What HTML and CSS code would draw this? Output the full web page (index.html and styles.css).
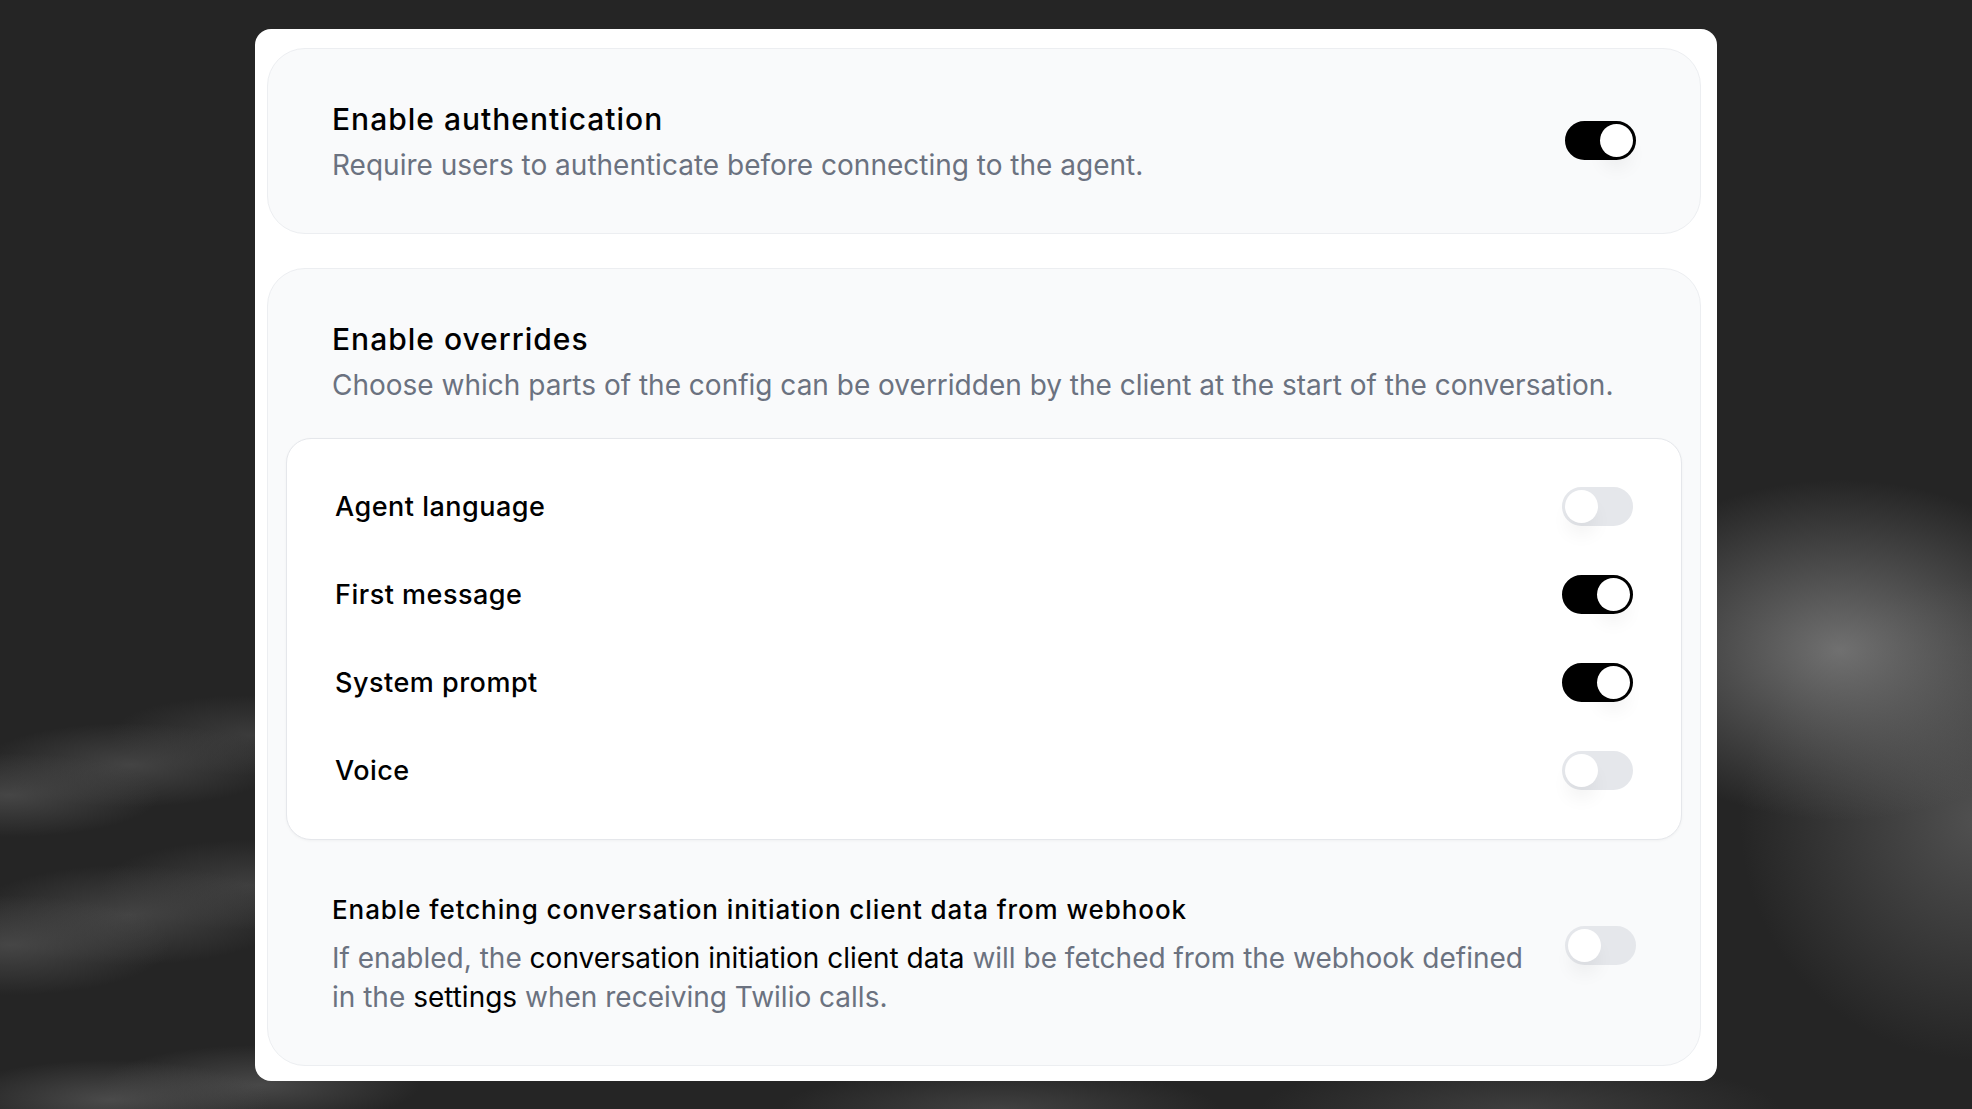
FILE: index.html
```html
<!DOCTYPE html>
<html lang="en">
<head>
<meta charset="utf-8">
<title>Agent security settings</title>
<link rel="stylesheet" href="styles.css">
</head>
<body>
<main class="panel">
  <section class="card card-row">
    <div class="text">
      <h2 class="title">Enable authentication</h2>
      <p class="desc">Require users to authenticate before connecting to the agent.</p>
    </div>
    <span class="switch on" role="switch" aria-checked="true"><span class="knob"></span></span>
  </section>

  <section class="card">
    <h2 class="title">Enable overrides</h2>
    <p class="desc">Choose which parts of the config can be overridden by the client at the start of the conversation.</p>

    <div class="list">
      <div class="item">
        <span class="label">Agent language</span>
        <span class="switch" role="switch" aria-checked="false"><span class="knob"></span></span>
      </div>
      <div class="item">
        <span class="label">First message</span>
        <span class="switch on" role="switch" aria-checked="true"><span class="knob"></span></span>
      </div>
      <div class="item">
        <span class="label">System prompt</span>
        <span class="switch on" role="switch" aria-checked="true"><span class="knob"></span></span>
      </div>
      <div class="item">
        <span class="label">Voice</span>
        <span class="switch" role="switch" aria-checked="false"><span class="knob"></span></span>
      </div>
    </div>

    <div class="webhook">
      <div class="text">
        <h3 class="subtitle">Enable fetching conversation initiation client data from webhook</h3>
        <p class="desc desc-long">If enabled, the <span class="strong">conversation initiation client data</span> will be fetched from the webhook defined in the <span class="strong">settings</span> when receiving Twilio calls.</p>
      </div>
      <span class="switch switch-top" role="switch" aria-checked="false"><span class="knob"></span></span>
    </div>
  </section>
</main>
</body>
</html>
```

FILE: styles.css
```css
* { box-sizing: border-box; }

html, body { height: 100%; }

body {
  margin: 0;
  height: 1109px;
  display: flex;
  align-items: center;
  justify-content: center;
  font-family: Inter, "Noto Sans", "Liberation Sans", sans-serif;
  background-color: #252525;
  background-image:
    radial-gradient(ellipse 250px 170px at 1840px 650px, rgba(116,116,116,0.95), rgba(116,116,116,0) 100%),
    radial-gradient(ellipse 240px 240px at 1980px 820px, rgba(88,88,88,0.85), rgba(88,88,88,0) 100%),
    radial-gradient(ellipse 150px 42px at 10px 795px, rgba(78,78,78,0.8), rgba(78,78,78,0) 100%),
    radial-gradient(ellipse 150px 42px at 130px 765px, rgba(78,78,78,0.75), rgba(78,78,78,0) 100%),
    radial-gradient(ellipse 140px 40px at 250px 735px, rgba(74,74,74,0.6), rgba(74,74,74,0) 100%),
    radial-gradient(ellipse 160px 50px at 10px 945px, rgba(78,78,78,0.8), rgba(78,78,78,0) 100%),
    radial-gradient(ellipse 160px 50px at 130px 915px, rgba(78,78,78,0.75), rgba(78,78,78,0) 100%),
    radial-gradient(ellipse 150px 45px at 250px 885px, rgba(76,76,76,0.65), rgba(76,76,76,0) 100%),
    radial-gradient(ellipse 160px 40px at 110px 1100px, rgba(84,84,84,0.8), rgba(84,84,84,0) 100%),
    radial-gradient(ellipse 160px 40px at 260px 1085px, rgba(84,84,84,0.75), rgba(84,84,84,0) 100%),
    radial-gradient(ellipse 220px 40px at 1000px 1109px, rgba(72,72,72,0.8), rgba(72,72,72,0) 100%),
    radial-gradient(ellipse 260px 50px at 1520px 1109px, rgba(68,68,68,0.8), rgba(68,68,68,0) 100%);
}

.panel {
  width: 1462px;
  height: 1052px;
  background: #ffffff;
  border-radius: 16px;
  padding: 19px 16px 15px 12px;
  display: flex;
  flex-direction: column;
  gap: 34px;
}

.card {
  background: #f9fafb;
  border: 1px solid #eceef1;
  border-radius: 38px;
  padding: 48px 64px;
}

.card-row {
  display: flex;
  align-items: center;
  gap: 32px;
}

.text { flex: 1; min-width: 0; }

.title {
  margin: 0;
  font-size: 30px;
  line-height: 44.8px;
  letter-spacing: 1px;
  font-weight: 500;
  color: #000;
}

.desc {
  margin: 4.8px 0 0;
  font-size: 28px;
  line-height: 38.4px;
  font-weight: 400;
  color: #6b7280;
}

.list {
  margin: 33px -46px 0;
  background: #ffffff;
  border: 1px solid #e5e7eb;
  border-radius: 25px;
  padding: 24px 48px;
  box-shadow: 0 1px 3px rgba(0,0,0,0.04);
}

.item {
  height: 88px;
  display: flex;
  align-items: center;
  justify-content: space-between;
}

.label {
  font-size: 27px;
  letter-spacing: 0.5px;
  font-weight: 500;
  color: #000;
}

.webhook {
  margin-top: 51px;
  display: flex;
  align-items: flex-start;
  gap: 32px;
}

.subtitle {
  margin: 0;
  font-size: 26px;
  line-height: 38.4px;
  letter-spacing: 0.92px;
  font-weight: 500;
  color: #000;
}

.desc-long {
  margin-top: 10px;
  line-height: 39px;
}

.strong { color: #000; }

.switch {
  flex: none;
  width: 71px;
  height: 39px;
  border-radius: 999px;
  border: 3px solid #e5e7eb;
  background: #e5e7eb;
  display: flex;
  align-items: center;
  justify-content: flex-start;
}

.switch.on {
  background: #000;
  border-color: #000;
  justify-content: flex-end;
}

.switch-top { margin-top: 35px; }

.knob {
  width: 33px;
  height: 33px;
  border-radius: 50%;
  background: #fff;
  box-shadow: 0 14px 20px -4px rgba(0,0,0,0.07);
}
```
